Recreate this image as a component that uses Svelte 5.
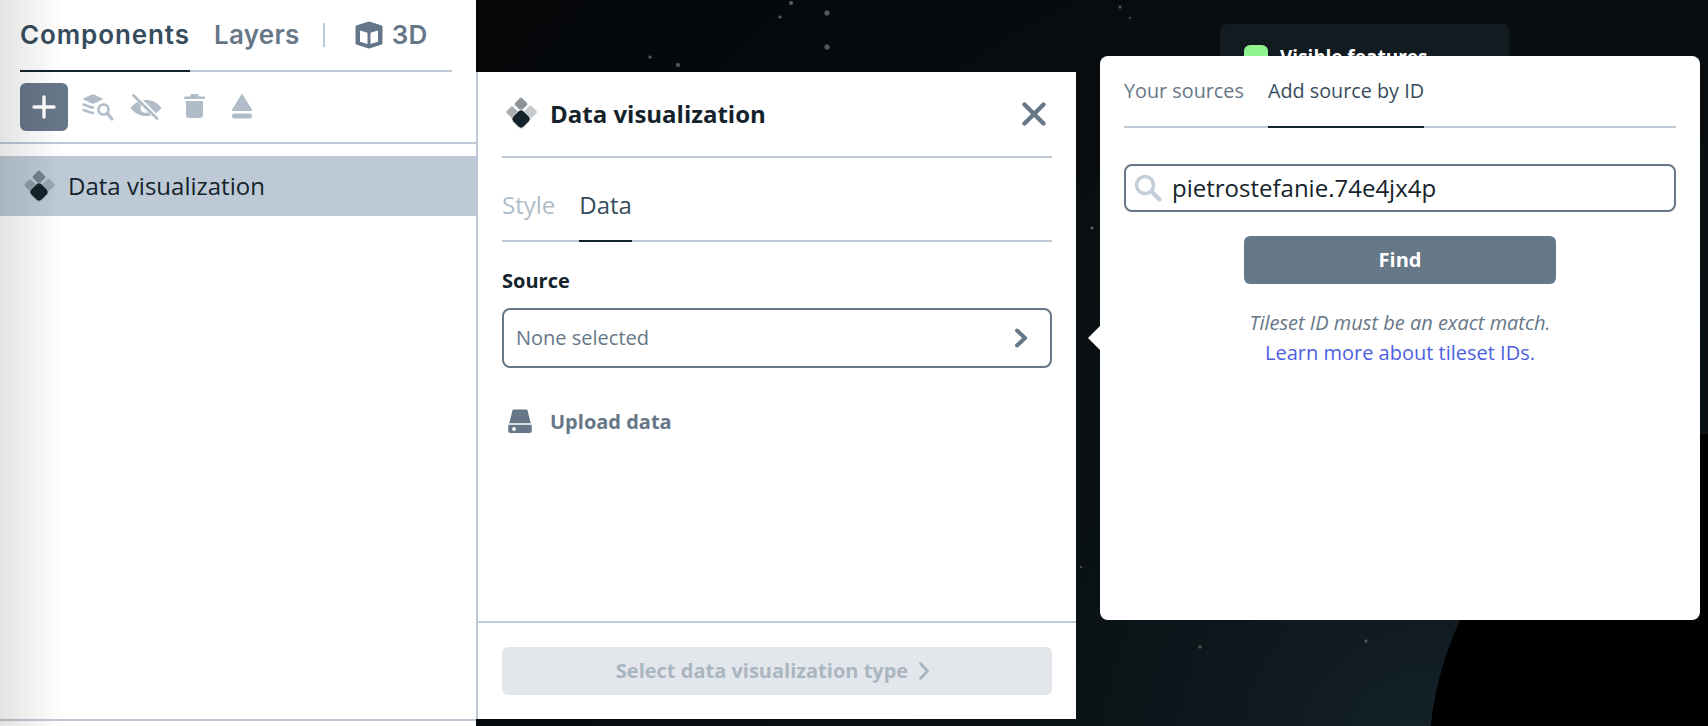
<script>
  const stars = [
    [650, 57, 1.5], [678, 65, 2], [780, 17, 1.5], [791, 3, 2], [827, 13, 2.5], [827, 47, 2.5],
    [1120, 7, 1.5], [1130, 18, 1.2], [1092, 228, 1.5], [1200, 647, 1.5], [1366, 641, 1.5], [1081, 567, 1]
  ];
  const tabs = ['Style', 'Data'];
</script>

<div class="stage">
  <div class="sky" aria-hidden="true">
    <div class="planet"></div>
    {#each stars as s}
      <span class="star" style="left:{s[0]}px;top:{s[1]}px;width:{s[2] * 2}px;height:{s[2] * 2}px"></span>
    {/each}
  </div>

  <div class="visible-card">
    <span class="swatch"></span>
    <span class="vf">Visible features</span>
  </div>

  <aside class="left">
    <div class="left-tabs">
      <span class="lt active">Components</span>
      <span class="lt">Layers</span>
      <span class="sep"></span>
      <span class="lt three">
        <svg width="28" height="28" viewBox="0 0 28 28"><path fill="#647689" stroke="#647689" stroke-width="2" stroke-linejoin="round" d="M14 1.500 26.500 5.500v17L14 26.500 1.500 22.500v-17z"/><path fill="#fff" d="M5 9.500l7.500 2.300v11.200L5 20.700zM23 9.500l-7.500 2.300v11.200l7.500-2.300z"/></svg>
        3D
      </span>
    </div>
    <div class="tools">
      <button class="add" aria-label="Add">
        <svg width="24" height="24" viewBox="0 0 24 24"><path d="M12 2v20M2 12h20" stroke="#fff" stroke-width="3.400" stroke-linecap="round"/></svg>
      </button>
      <span class="tool">
        <svg width="32" height="32" viewBox="0 0 32 32" fill="none" stroke="#b0bdc9"><path d="M11 3 21.500 8 11 13 .500 8z" fill="#b0bdc9" stroke="none"/><path d="M1.500 13.500c3.500.5 5 3 9.500 3M1.500 19c3.500.5 5 3 9.500 3" stroke-width="2.600" stroke-linecap="round"/><circle cx="21.500" cy="18.500" r="5" stroke-width="2.600"/><path d="M25.500 22.500 30 28" stroke-width="3.200" stroke-linecap="round"/></svg>
      </span>
      <span class="tool">
        <svg width="32" height="32" viewBox="0 0 32 32"><path fill="#b0bdc9" d="M.500 17C5 11.500 10 9 16 9s11 2.500 15.500 8C27 22.500 22 25 16 25S5 22.500.500 17z"/><circle cx="15.500" cy="17" r="5" fill="#fff"/><path d="M15.500 12a5 5 0 0 1 5 5h-5z" fill="#b0bdc9"/><path d="M5.500 5 29 29" stroke="#fff" stroke-width="5"/><path d="M3.500 4.500 27 27.500" stroke="#b0bdc9" stroke-width="2.800" stroke-linecap="round"/></svg>
      </span>
      <span class="tool">
        <svg width="32" height="32" viewBox="0 0 32 32"><path fill="#b0bdc9" d="M13 3h7l1 2.500h4.800a1.100 1.100 0 0 1 0 2.500H7.200a1.100 1.100 0 0 1 0-2.500H12zM8 10h17v14a3 3 0 0 1-3 3H11a3 3 0 0 1-3-3z"/></svg>
      </span>
      <span class="tool">
        <svg width="32" height="32" viewBox="0 0 32 32"><path fill="#b0bdc9" d="M16 2.500 26 18.500a1 1 0 0 1-.900 1.500H6.900a1 1 0 0 1-.900-1.500z"/><rect x="6" y="22.500" width="20" height="5" rx="2.200" fill="#b0bdc9"/></svg>
      </span>
    </div>
    <div class="row">
      <svg width="32" height="32" viewBox="0 0 32 32"><rect x="11" y="2" width="10" height="10" rx="1.800" fill="#74838f" transform="rotate(45 16 7)"/><rect x="2.500" y="10.500" width="9" height="9" rx="1.800" fill="#8f9ca8" transform="rotate(45 7 15)"/><rect x="20.500" y="10" width="10" height="10" rx="1.800" fill="#9aa7b2" transform="rotate(45 25.500 15)"/><rect x="8.500" y="14.500" width="15" height="15" rx="3.500" fill="#14232b" stroke="#bdcad6" stroke-width=".8" transform="rotate(45 16 22)"/></svg>
      <span>Data visualization</span>
    </div>
    <div class="left-bottom"></div>
    <div class="shade"></div>
  </aside>

  <section class="mid">
    <header class="mid-head">
      <svg width="32" height="32" viewBox="0 0 32 32"><rect x="11" y="2" width="10" height="10" rx="1.800" fill="#8d9396" transform="rotate(45 16 7)"/><rect x="2.500" y="10.500" width="9" height="9" rx="1.800" fill="#a9aeb1" transform="rotate(45 7 15)"/><rect x="20.500" y="10" width="10" height="10" rx="1.800" fill="#c6cacc" transform="rotate(45 25.500 15)"/><rect x="8.500" y="14.500" width="15" height="15" rx="3.500" fill="#14232b" stroke="#fff" stroke-width=".8" transform="rotate(45 16 22)"/></svg>
      <h2>Data visualization</h2>
      <svg class="close" width="24" height="24" viewBox="0 0 24 24"><path d="M2.500 2.500l19 19M21.500 2.500l-19 19" stroke="#667788" stroke-width="4.300" stroke-linecap="round"/></svg>
    </header>
    <nav class="mid-tabs">
      {#each tabs as t, i}
        <span class:on={i === 1}>{t}</span>
      {/each}
    </nav>
    <div class="mid-body">
      <div class="label">Source</div>
      <div class="select">
        <span>None selected</span>
        <svg width="14" height="20" viewBox="0 0 14 20"><path d="M3 2.500 11 10l-8 7.500" fill="none" stroke="#667788" stroke-width="4" stroke-linecap="round" stroke-linejoin="round"/></svg>
      </div>
      <div class="upload">
        <svg width="24" height="24" viewBox="0 0 24 24"><path fill="#667788" d="M5.500 0.500h13a1 1 0 0 1 1 .8L22.800 14.300H1.200L4.500 1.300a1 1 0 0 1 1-.8zM1 15.800h22a.8.800 0 0 1 .8.800V22a2 2 0 0 1-2 2H2.200a2 2 0 0 1-2-2v-5.400A.8.800 0 0 1 1 15.800z"/><circle cx="6" cy="20" r="1.900" fill="#fff"/></svg>
        <span>Upload data</span>
      </div>
    </div>
    <footer class="mid-foot">
      <div class="disabled">
        <span>Select data visualization type</span>
        <svg width="12" height="20" viewBox="0 0 12 20"><path d="M2.500 2.500 9.500 10l-7 7.500" fill="none" stroke="#a9b6c2" stroke-width="2.800" stroke-linecap="round" stroke-linejoin="round"/></svg>
      </div>
    </footer>
  </section>

  <section class="pop">
    <span class="arrow"></span>
    <nav class="pop-tabs">
      <span>Your sources</span>
      <span class="on">Add source by ID</span>
    </nav>
    <div class="search">
      <svg width="28" height="28" viewBox="0 0 28 28" fill="none"><circle cx="11" cy="11" r="8.500" stroke="#c3ced9" stroke-width="3.600"/><path d="M17.500 17.500 25.500 25.500" stroke="#c3ced9" stroke-width="4.200" stroke-linecap="round"/></svg>
      <span>pietrostefanie.74e4jx4p</span>
    </div>
    <div class="find"><span>Find</span></div>
    <p class="hint">Tileset ID must be an exact match.</p>
    <p class="link">Learn more about tileset IDs.</p>
  </section>
</div>

<style>
  :global(body) { margin: 0; background: #05080b; }
  .stage {
    position: relative;
    width: 1708px;
    height: 726px;
    overflow: hidden;
    display: flex;
    align-items: flex-start;
    font-family: "Open Sans", "Liberation Sans", sans-serif;
    color: #14232b;
    background: radial-gradient(circle at 1430px 760px, #15232b 0, #0f1a1f 170px, #0a1114 400px, #090d10 750px, #040608 1200px);
  }
  .sky { position: absolute; inset: 0; overflow: hidden; }
  .planet {
    position: absolute;
    left: 1429px;
    top: 430px;
    width: 660px;
    height: 660px;
    border-radius: 50%;
    background: radial-gradient(circle at center, #000 77%, #0a1013 100%);
  }
  .star {
    position: absolute;
    border-radius: 50%;
    background: #55585a;
    transform: translate(-50%, -50%);
    box-shadow: 0 0 1px #3a3d3f;
  }
  .visible-card {
    position: absolute;
    left: 1220px;
    top: 24px;
    width: 289px;
    height: 60px;
    box-sizing: border-box;
    padding: 20px 24px 0;
    background: #111b20;
    border-radius: 6px;
    display: flex;
    gap: 12px;
  }
  .swatch { width: 24px; height: 24px; margin-top: 1px; border-radius: 6px; background: #8ff28f; }
  .vf { color: #fff; font-weight: 700; font-size: 19px; line-height: 26px; }

  .left {
    position: relative;
    flex: none;
    width: 476px;
    height: 726px;
    background: #fff;
  }
  .left-tabs {
    margin: 0 24px 0 20px;
    height: 70px;
    border-bottom: 2px solid #bdcad6;
    display: flex;
    align-items: center;
    position: relative;
  }
  .left-tabs::after {
    content: '';
    position: absolute;
    left: 0;
    bottom: -2px;
    width: 170px;
    height: 2px;
    background: #14232b;
  }
  .lt {
    font-family: Inter, "Noto Sans", sans-serif;
    font-weight: 600;
    font-size: 26px;
    letter-spacing: 0.3px;
    line-height: 70px;
    color: #667788;
  }
  .lt.active { color: #364c5c; margin-right: 24px; letter-spacing: 0.9px; }
  .sep { width: 2px; height: 24px; background: #bdcad6; margin: 0 30px 0 23px; }
  .three { display: flex; align-items: center; gap: 9px; }
  .tools {
    height: 70px;
    border-bottom: 2px solid #bdcad6;
    padding-left: 20px;
    display: flex;
    align-items: center;
    gap: 16px;
  }
  .tool { width: 32px; height: 32px; display: block; }
  .tool svg { display: block; }
  .add {
    width: 48px;
    height: 48px;
    border: 0;
    padding: 0;
    border-radius: 6px;
    background: #667788;
    display: flex;
    align-items: center;
    justify-content: center;
    margin: -1px -2px 0 0;
  }
  .row {
    margin-top: 12px;
    height: 60px;
    background: #bdcad6;
    display: flex;
    align-items: center;
    padding-left: 23px;
    gap: 13px;
    font-size: 24px;
    color: #14232b;
  }
  .row span { margin-top: -2px; }
  .row svg { margin-top: -1px; }
  .left-bottom {
    position: absolute;
    left: 0;
    right: 0;
    top: 719px;
    height: 2px;
    background: #bdcad6;
  }
  .shade {
    position: absolute;
    inset: 0 auto 0 0;
    width: 62px;
    background: linear-gradient(90deg, rgba(0,0,0,.11), rgba(0,0,0,0));
    pointer-events: none;
  }

  .mid {
    position: relative;
    flex: none;
    box-sizing: border-box;
    width: 600px;
    height: 647px;
    margin-top: 72px;
    background: #fff;
    border-left: 2px solid #bdcad6;
    display: flex;
    flex-direction: column;
  }
  .mid-head {
    margin: 0 24px;
    height: 84px;
    border-bottom: 2px solid #bdcad6;
    display: flex;
    align-items: center;
    gap: 13px;
    padding-left: 3px;
  }
  .mid-head > svg:first-child { margin-top: -2px; }
  h2 { margin: 0; font-size: 24px; font-weight: 700; color: #14232b; flex: 1; line-height: 32px; }
  .close { margin-right: 6px; }
  .mid-tabs {
    margin: 0 24px;
    height: 82px;
    border-bottom: 2px solid #bdcad6;
    display: flex;
    gap: 24px;
    font-size: 24px;
    color: #b0bdc9;
  }
  .mid-tabs span { height: 84px; line-height: 94px; box-sizing: border-box; }
  .mid-tabs .on { color: #364c5c; border-bottom: 2px solid #14232b; }
  .mid-body { flex: 1; padding: 25px 24px 0; }
  .label { font-size: 20px; font-weight: 700; line-height: 28px; color: #14232b; }
  .select {
    margin-top: 13px;
    height: 60px;
    box-sizing: border-box;
    border: 2px solid #667788;
    border-radius: 8px;
    padding: 0 22px 0 12px;
    display: flex;
    align-items: center;
    justify-content: space-between;
    font-size: 20px;
    color: #667788;
  }
  .select span { margin-top: -2px; }
  .upload {
    margin-top: 41px;
    height: 24px;
    padding-left: 6px;
    display: flex;
    align-items: center;
    gap: 18px;
    font-size: 20px;
    font-weight: 700;
    color: #667788;
  }
  .mid-foot {
    border-top: 2px solid #bdcad6;
    height: 98px;
    box-sizing: border-box;
    padding: 24px 24px 0;
  }
  .disabled {
    height: 48px;
    border-radius: 6px;
    background: #e3e6ea;
    color: #a9b6c2;
    font-size: 20px;
    font-weight: 700;
    display: flex;
    align-items: center;
    justify-content: center;
    gap: 10px;
    padding-right: 8px;
  }
  .disabled span { margin-top: -2px; }

  .pop {
    position: relative;
    flex: none;
    box-sizing: border-box;
    width: 600px;
    height: 564px;
    margin: 56px 0 0 24px;
    padding: 0 24px;
    background: #fff;
    border-radius: 8px;
    display: flex;
    flex-direction: column;
  }
  .arrow {
    position: absolute;
    left: -12px;
    top: 270px;
    width: 0;
    height: 0;
    border-style: solid;
    border-width: 12px 12px 12px 0;
    border-color: transparent #fff transparent transparent;
  }
  .pop-tabs {
    height: 70px;
    border-bottom: 2px solid #bdcad6;
    display: flex;
    gap: 24px;
    font-size: 19.800px;
    color: #667788;
    flex: none;
  }
  .pop-tabs span { height: 72px; line-height: 70px; box-sizing: border-box; }
  .pop-tabs .on { color: #364c5c; border-bottom: 2px solid #14232b; }
  .search {
    margin-top: 36px;
    height: 48px;
    flex: none;
    box-sizing: border-box;
    border: 2px solid #667788;
    border-radius: 8px;
    display: flex;
    align-items: center;
    gap: 10px;
    padding-left: 8px;
    font-size: 24px;
    color: #14232b;
  }
  .search span { line-height: 44px; }
  .find {
    margin: 24px auto 0;
    width: 312px;
    height: 48px;
    flex: none;
    border-radius: 6px;
    background: #667788;
    color: #fff;
    font-size: 20px;
    font-weight: 700;
    display: flex;
    align-items: center;
    justify-content: center;
  }
  .find span { margin-top: -2px; }
  p { margin: 0; text-align: center; font-size: 20px; line-height: 30px; }
  .hint { margin-top: 24px; font-style: italic; color: #667788; }
  .link { color: #4c5fe0; }
</style>
